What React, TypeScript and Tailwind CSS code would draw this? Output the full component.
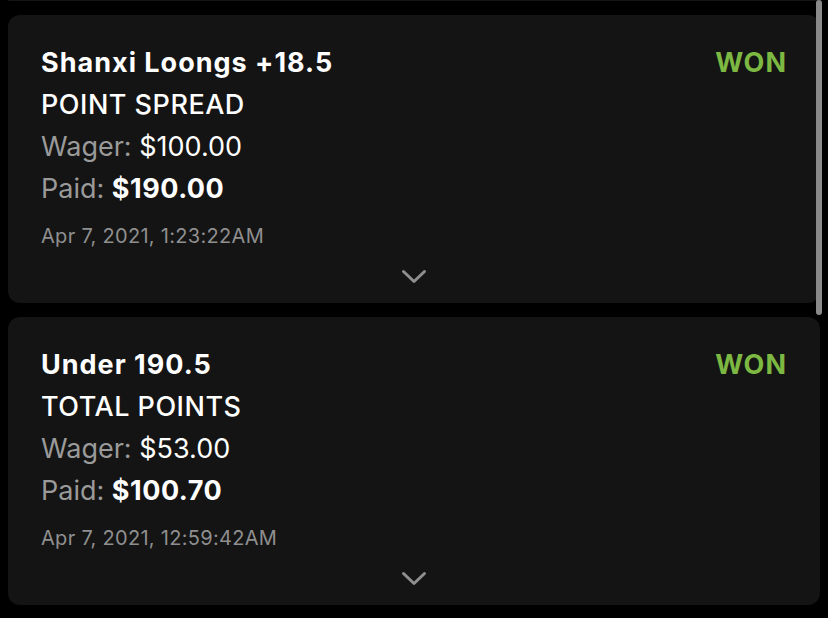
const bets = [
  {
    title: "Shanxi Loongs +18.5",
    market: "POINT SPREAD",
    wager: "$100.00",
    paid: "$190.00",
    placed: "Apr 7, 2021, 1:23:22AM",
    status: "WON",
  },
  {
    title: "Under 190.5",
    market: "TOTAL POINTS",
    wager: "$53.00",
    paid: "$100.70",
    placed: "Apr 7, 2021, 12:59:42AM",
    status: "WON",
  },
];

function Chevron() {
  return (
    <svg width="26" height="16" viewBox="0 0 26 16" fill="none">
      <path d="M2.5 2.5 L13 12.5 L23.5 2.5" stroke="#8f8f8f" strokeWidth="3" strokeLinecap="round" strokeLinejoin="round" />
    </svg>
  );
}

export default function App() {
  return (
    <div className="relative h-[618px] w-[828px] overflow-hidden bg-black font-['Inter',sans-serif]">
      <div className="flex flex-col gap-[14px] px-2">
        {/* tail of the card above */}
        <div className="h-px rounded-b-xl bg-[#141414]" />

        {bets.map((b) => (
          <div key={b.placed} className="flex h-[288px] flex-col rounded-xl bg-[#141414] px-[33px] pt-[27px]">
            <div className="flex items-start justify-between">
              <div className="text-[27px] leading-[42px] text-white">
                <p className="font-bold tracking-[1px]">{b.title}</p>
                <p className="font-medium tracking-[0.5px]">{b.market}</p>
                <p>
                  <span className="text-[#9a9a9a]">Wager:</span> {b.wager}
                </p>
                <p>
                  <span className="text-[#9a9a9a]">Paid:</span> <span className="font-bold tracking-[0.5px]">{b.paid}</span>
                </p>
              </div>
              <p className="text-[27px] leading-[42px] font-bold tracking-[1px] text-[#7cb842]">{b.status}</p>
            </div>
            <p className="mt-[14px] text-[20px] leading-[24px] tracking-[0.3px] text-[#8f8f8f]">{b.placed}</p>
            <div className="mt-[21px] flex justify-center">
              <Chevron />
            </div>
          </div>
        ))}
      </div>

      {/* scroll indicator */}
      <div className="absolute right-[6px] top-0 h-[315px] w-[6px] rounded-full bg-[#8a8a8a]" />
    </div>
  );
}
